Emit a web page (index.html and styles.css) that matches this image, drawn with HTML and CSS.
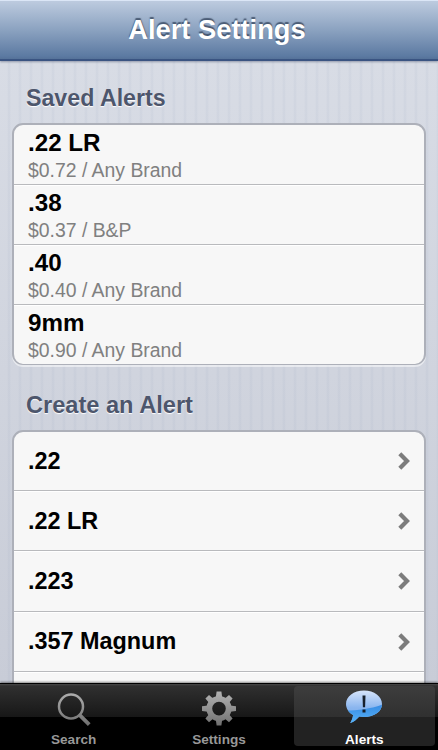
FILE: index.html
```
<!DOCTYPE html>
<html lang="en">
<head>
    <meta charset="UTF-8">
    <meta name="viewport" content="width=device-width, initial-scale=1.0">
    <title>Alert Settings</title>
    <link rel="stylesheet" href="styles.css">
</head>
<body>
    <div class="app">
      <header class="navbar">
        <h1>Alert Settings</h1>
      </header>

      <main class="content">
        <h2>Saved Alerts</h2>
        <ul class="list saved">
          <li>
            <span class="name">.22 LR</span>
            <span class="detail">$0.72 / Any Brand</span>
          </li>
          <li>
            <span class="name">.38</span>
            <span class="detail">$0.37 / B&amp;P</span>
          </li>
          <li>
            <span class="name">.40</span>
            <span class="detail">$0.40 / Any Brand</span>
          </li>
          <li>
            <span class="name">9mm</span>
            <span class="detail">$0.90 / Any Brand</span>
          </li>
        </ul>

        <h2 class="create-title">Create an Alert</h2>
        <ul class="list create">
          <li>
            <span>.22</span>
            <svg class="chevron" width="14" height="18" viewBox="0 0 14 18"><path d="M2.8 1.8L10 9L2.8 16.2"/></svg>
          </li>
          <li>
            <span>.22 LR</span>
            <svg class="chevron" width="14" height="18" viewBox="0 0 14 18"><path d="M2.8 1.8L10 9L2.8 16.2"/></svg>
          </li>
          <li>
            <span>.223</span>
            <svg class="chevron" width="14" height="18" viewBox="0 0 14 18"><path d="M2.8 1.8L10 9L2.8 16.2"/></svg>
          </li>
          <li>
            <span>.357 Magnum</span>
            <svg class="chevron" width="14" height="18" viewBox="0 0 14 18"><path d="M2.8 1.8L10 9L2.8 16.2"/></svg>
          </li>
          <li></li>
        </ul>
      </main>

      <nav class="tabbar">
        <a class="tab">
          <svg width="40" height="38" viewBox="0 0 40 38">
            <defs>
              <linearGradient id="grey" gradientUnits="userSpaceOnUse" x1="0" y1="2" x2="0" y2="37">
                <stop offset="0" stop-color="#b0b0b0"/>
                <stop offset="1" stop-color="#6c6c6c"/>
              </linearGradient>
            </defs>
            <circle cx="17" cy="16.5" r="12" fill="none" stroke="url(#grey)" stroke-width="2.5"/>
            <path d="M25.7 25.2L35.2 34.7" fill="none" stroke="url(#grey)" stroke-width="3.8"/>
          </svg>
          <span>Search</span>
        </a>
        <a class="tab">
          <svg width="40" height="38" viewBox="0 0 40 38">
            <g fill="url(#grey)" transform="translate(0 .6)">
              <path fill-rule="evenodd" d="M20 5.4a12.6 12.6 0 1 0 0 25.2a12.6 12.6 0 1 0 0-25.2zM20 11.2a6.8 6.8 0 1 1 0 13.6a6.8 6.8 0 1 1 0-13.6z"/>
              <path d="M16.8 7L17.6 1H22.4L23.2 7zM16.8 29L17.6 35H22.4L23.2 29zM9 14.8L3 15.6V20.4L9 21.2zM31 14.8L37 15.6V20.4L31 21.2z"/>
              <path d="M9.9 12.1L6.4 8L10 4.4L14.1 7.9zM30.1 12.1L33.6 8L30 4.4L25.9 7.9zM9.9 23.9L6.4 28L10 31.6L14.1 28.1zM30.1 23.9L33.6 28L30 31.6L25.9 28.1z"/>
            </g>
          </svg>
          <span>Settings</span>
        </a>
        <a class="tab active">
          <svg width="40" height="38" viewBox="0 0 40 38">
            <defs>
              <linearGradient id="blue" x1="0" y1="0" x2="0" y2="1">
                <stop offset="0" stop-color="#d9e6fb"/>
                <stop offset=".5" stop-color="#8bb6ef"/>
                <stop offset="1" stop-color="#6ba3e8"/>
              </linearGradient>
              <linearGradient id="shine" x1="0" y1="0" x2="0" y2="1">
                <stop offset="0" stop-color="#3689e2"/>
                <stop offset="1" stop-color="#59b8fb"/>
              </linearGradient>
              <clipPath id="bubble">
                <path d="M20 .5C30.3 .5 38 6.7 38 14C38 21.5 30.3 26.9 20 26.9C18.3 26.9 16.8 26.8 15.3 26.5C12.8 29.5 9.8 31.8 6.2 33C7.9 30.2 8.8 27.7 9.1 25C4.8 22.6 2 18.7 2 14C2 6.7 9.7 .5 20 .5z"/>
              </clipPath>
            </defs>
            <g clip-path="url(#bubble)">
              <path fill="url(#blue)" d="M0 0H40V35H0z"/>
              <path fill="url(#shine)" d="M0 20.5C13 20.5 27 19 40 14V35H0z"/>
            </g>
            <path d="M18.5 5.5H21.5L21.1 17.3H18.9zM18.5 19.6H21.5V22.5H18.5z" fill="#17202c"/>
          </svg>
          <span>Alerts</span>
        </a>
      </nav>
    </div>
</body>
</html>
```
FILE: styles.css
```
* {
  box-sizing: border-box;
}

body {
  margin: 0;
  font-family: "Liberation Sans", Arial, sans-serif;
}

.app {
  display: flex;
  flex-direction: column;
  height: 750px;
  overflow: hidden;
}

.navbar {
  flex: none;
  display: flex;
  justify-content: center;
  height: 61px;
  padding-right: 4px;
  background: linear-gradient(#bdcbdf, #8ba2c0 50%, #5c7aa2 95%, #557299);
  border-top: 1px solid #dbe6f6;
  border-bottom: 2px solid #3a5482;
  box-shadow: 0 1px 2px rgba(60, 70, 100, 0.45);
  z-index: 1;
}

.navbar h1 {
  margin: 0;
  font-size: 27.3px;
  line-height: 58px;
  color: #fff;
  text-shadow: 0 -2px 1px rgba(40, 55, 80, 0.7);
}

.content {
  flex: 1;
  min-height: 0;
  overflow: hidden;
  padding: 0 12px;
  background:
    repeating-linear-gradient(90deg, rgba(115, 135, 170, 0) 0, rgba(115, 135, 170, 0) 7px, rgba(115, 135, 170, 0.08) 9px, rgba(115, 135, 170, 0) 11px),
    linear-gradient(#d8dce5, #c8ccd7);
}

.content h2 {
  margin: 0;
  padding: 23px 0 0 14px;
  height: 62px;
  font-size: 23.2px;
  line-height: 28px;
  color: #4d566c;
  text-shadow: 0 1px 1px #fff;
}

.content .create-title {
  height: 65px;
  padding-top: 26px;
  font-size: 23.6px;
}

.list {
  margin: 0;
  padding: 0;
  list-style: none;
  background: #f7f7f7;
  border: 2px solid #adb0b9;
  border-bottom-width: 1px;
  border-radius: 11px;
  box-shadow: 0 2px 0 rgba(255, 255, 255, 0.5);
}

.list li {
  height: 60px;
  padding: 0 14px;
  border-bottom: 1px solid #b9babd;
}

.list li + li {
  box-shadow: inset 0 1px 0 #fff;
}

.list li:last-child {
  border-bottom: none;
}

.saved li {
  display: flex;
  flex-direction: column;
}

.saved li:last-child {
  height: 59px;
}

.name {
  font-size: 24.2px;
  font-weight: bold;
  line-height: 28px;
  padding-top: 4px;
}

.detail {
  font-size: 19.4px;
  line-height: 24px;
  padding-top: 1px;
  color: #808080;
}

.create li {
  display: flex;
  justify-content: space-between;
  align-items: center;
  height: 60.25px;
  padding-right: 13px;
  font-size: 23.4px;
  font-weight: bold;
}

.create li:first-child {
  height: 59px;
}

.create li + li {
  padding-top: 1px;
}

.chevron path {
  fill: none;
  stroke: #7c7c7c;
  stroke-width: 4.2;
}

.tabbar {
  flex: none;
  display: flex;
  height: 67px;
  padding: 3px 3px 4px;
  gap: 4px;
  background: linear-gradient(#000 1px, #484848 1px, #303030 3px, #171717 34px, #000 34px);
  box-shadow: 0 -1px 2px rgba(0, 0, 0, 0.45);
  z-index: 1;
}

.tab {
  flex: 1;
  display: flex;
  flex-direction: column;
  align-items: center;
  height: 60px;
  border-radius: 4px;
  color: #989898;
  font-size: 13.6px;
  font-weight: bold;
  line-height: 12px;
}

.tab svg {
  flex: none;
  margin: 4px 0 6px;
}

.tab.active {
  color: #fff;
  background: linear-gradient(#3d3d3d, #303030 31px, #222 31px);
}
```
